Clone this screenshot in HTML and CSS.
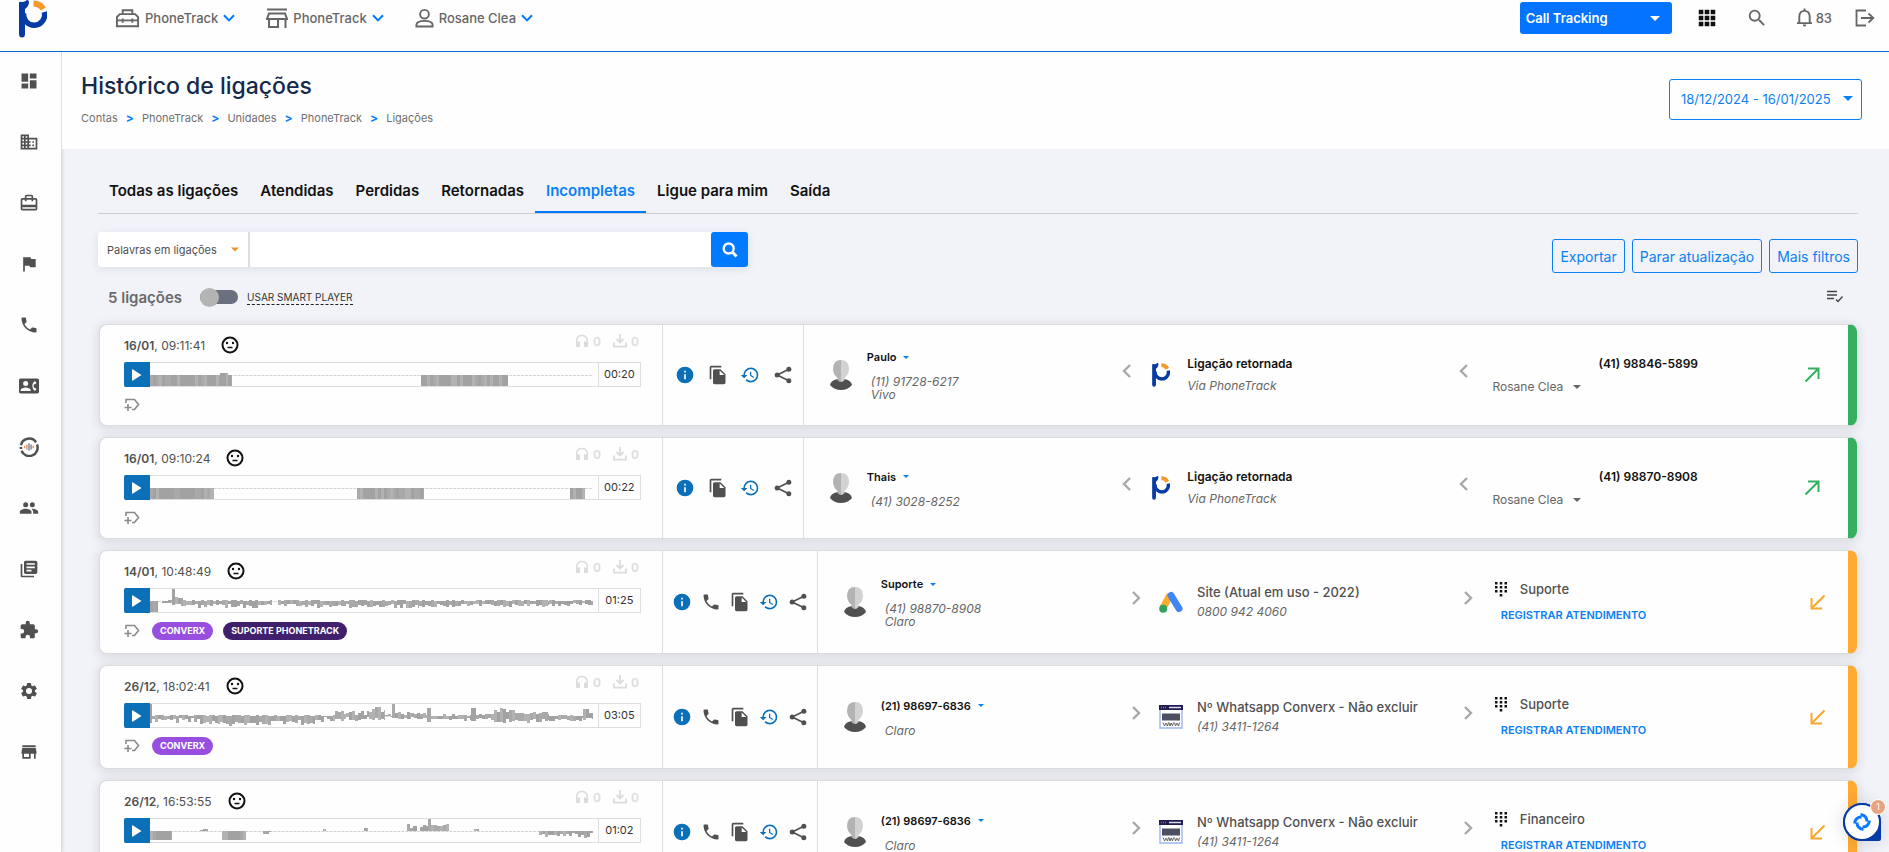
FILE: index.html
```html
<!DOCTYPE html>
<html lang="pt-BR">
<head>
<meta charset="utf-8">
<meta name="viewport" content="width=device-width, initial-scale=1">
<title>Histórico de ligações</title>
<link rel="stylesheet" href="styles.css">
<script src="script.js" defer></script>
</head>
<body>
<svg class="sprite" aria-hidden="true">
  <symbol id="brand" viewBox="0 0 28 38">
    <path d="M0 3Q0 1 3 2Q6 2 8 0Q10 0 10 2Q10 6 6 9V34Q6 37.500 3 37.500Q0 37.500 0 34Z" fill="#063aa5"/>
    <path d="M25.300 12A10.500 10.500 0 1 1 4.800 13" fill="none" stroke="#063aa5" stroke-width="5.400"/>
    <path d="M14.500 3.500A11.500 11.500 0 0 1 24.300 9" fill="none" stroke="#f7982a" stroke-width="6"/>
  </symbol>
  <symbol id="chev-down" viewBox="0 0 12 8"><path d="M1 1.2 6 6.4 11 1.2" fill="none" stroke="#007bff" stroke-width="2"/></symbol>
  <symbol id="chev-right" viewBox="0 0 9 14"><path d="M1 1 7 7 1 13" fill="none" stroke="#a8a8a8" stroke-width="2.4"/></symbol>
  <symbol id="chev-left" viewBox="0 0 9 14"><path d="M8 1 2 7 8 13" fill="none" stroke="#a8a8a8" stroke-width="2.4"/></symbol>
  <symbol id="caret" viewBox="0 0 10 5"><path d="M0 0H10L5 5Z"/></symbol>
  <symbol id="toolbox" viewBox="0 0 26 20"><path d="M8 6V2H18V6M2 9 5 6H21L24 9V18.5H2ZM2 12.5H24M8 10.5V15M18 10.5V15" fill="none" stroke="currentColor" stroke-width="2"/></symbol>
  <symbol id="store-line" viewBox="0 0 22 20"><path d="M1 1.5H21" stroke="currentColor" stroke-width="2"/><path d="M3 5.5H19L21 11H1ZM3 11V19H12V11M19.5 11V20" fill="none" stroke="currentColor" stroke-width="2"/></symbol>
  <symbol id="person" viewBox="0 0 20 20"><circle cx="10" cy="6" r="4.6" fill="none" stroke="currentColor" stroke-width="2"/><path d="M1.5 19V17Q2 13 10 13Q18 13 18.500 17V19Z" fill="none" stroke="currentColor" stroke-width="2"/></symbol>
  <symbol id="apps" viewBox="0 0 24 24"><path d="M3 8h5V3H3v5zm6.500 13h5v-5h-5v5zM3 21h5v-5H3v5zm0-6.500h5v-5H3v5zm6.500 0h5v-5h-5v5zM16 3v5h5V3h-5zM9.500 8h5V3h-5v5zm6.500 6.500h5v-5h-5v5zM16 21h5v-5h-5v5z"/></symbol>
  <symbol id="search" viewBox="0 0 24 24"><path d="M15.500 14h-.79l-.28-.27A6.471 6.471 0 0 0 16 9.500 6.500 6.500 0 1 0 9.500 16c1.610 0 3.090-.59 4.230-1.570l.27.28v.79l5 4.990L20.490 19l-4.990-5zm-6 0C7.010 14 5 11.990 5 9.500S7.010 5 9.500 5 14 7.010 14 9.500 11.990 14 9.500 14z"/></symbol>
  <symbol id="search-bold" viewBox="0 0 16 16"><circle cx="6.700" cy="6.500" r="5" fill="none" stroke="#fff" stroke-width="2.400"/><path d="M10.300 10 14.500 14.500" stroke="#fff" stroke-width="3"/></symbol>
  <symbol id="bell" viewBox="0 0 18 20"><path d="M1 16H17M3.500 16V8.500Q4 3 9 3T14.500 8.500V16M9 3V0.500" fill="none" stroke="currentColor" stroke-width="2"/><path d="M7 17.500H11L10 19.500H8Z" fill="currentColor"/></symbol>
  <symbol id="logout" viewBox="0 0 20 18"><path d="M11 1.500H1.500V16.500H11M6 9H18M13.500 4.500 18.300 9 13.500 13.500" fill="none" stroke="currentColor" stroke-width="1.800"/></symbol>
  <symbol id="dashboard" viewBox="0 0 24 24"><path d="M3 13h8V3H3v10zm0 8h8v-6H3v6zm10 0h8V11h-8v10zm0-18v6h8V3h-8z"/></symbol>
  <symbol id="building" viewBox="0 0 24 24"><path fill-rule="evenodd" d="M12 7V3H2v18h20V7H12zM6 19H4v-2h2v2zm0-4H4v-2h2v2zm0-4H4V9h2v2zm0-4H4V5h2v2zm4 12H8v-2h2v2zm0-4H8v-2h2v2zm0-4H8V9h2v2zm0-4H8V5h2v2zm10 12h-8v-2h2v-2h-2v-2h2v-2h-2V9h8v10zm-2-8h-2v2h2v-2zm0 4h-2v2h2v-2z"/></symbol>
  <symbol id="case" viewBox="0 0 24 24"><path fill-rule="evenodd" d="M20 6h-3V4c0-1.110-.89-2-2-2H9c-1.110 0-2 .89-2 2v2H4c-1.110 0-2 .89-2 2v11c0 1.110.89 2 2 2h16c1.110 0 2-.89 2-2V8c0-1.110-.89-2-2-2zM9 4h6v2H9V4zm11 15H4v-2h16v2zm0-5H4V8h3v2h2V8h6v2h2V8h3v6z"/></symbol>
  <symbol id="flag" viewBox="0 0 24 24"><path d="M14.400 6 14 4H5v17h2v-7h5.600l.4 2h7V6z"/></symbol>
  <symbol id="phone" viewBox="0 0 24 24"><path d="M6.620 10.790c1.440 2.830 3.760 5.140 6.590 6.590l2.200-2.200c.27-.27.67-.36 1.020-.24 1.120.37 2.330.57 3.570.57.550 0 1 .45 1 1V20c0 .55-.45 1-1 1-9.390 0-17-7.610-17-17 0-.55.45-1 1-1h3.500c.55 0 1 .45 1 1 0 1.250.2 2.450.57 3.570.11.350.03.740-.25 1.020l-2.200 2.200z"/></symbol>
  <symbol id="contact" viewBox="0 0 24 24"><path fill-rule="evenodd" d="M22 3H2C.9 3 0 3.900 0 5v14c0 1.100.9 2 2 2h20c1.100 0 2-.9 2-2V5c0-1.100-.9-2-2-2zM8 6a3 3 0 1 1 0 6 3 3 0 0 1 0-6zm6 12H2v-1c0-2 4-3.100 6-3.100s6 1.100 6 3.100v1zm3.850-4h1.640L21 16l-1.990 1.990A7.500 7.500 0 0 1 16 12c0-2.400 1.100-4.500 3.010-5.990L21 8l-1.510 2h-1.640a6 6 0 0 0 0 4z"/></symbol>
  <symbol id="voice" viewBox="0 0 24 24"><path d="M2.300 10A10 10 0 0 1 20.500 6.500M21.600 9A10 10 0 0 1 3 16.500M2.300 14.500V12" fill="none" stroke="#505050" stroke-width="3"/><path d="M7 10.500V13.500M9.500 9V15M17 10.500V13.500" stroke="#e0934a" stroke-width="1.600"/><path d="M12 7.500V16.500M14.500 9V15" stroke="#707b96" stroke-width="1.600"/></symbol>
  <symbol id="people" viewBox="0 0 24 24"><path d="M16 11a3 3 0 1 0 0-6 3 3 0 0 0 0 6zm-8 0a3 3 0 1 0 0-6 3 3 0 0 0 0 6zm0 2c-2.330 0-7 1.170-7 3.500V19h14v-2.500c0-2.330-4.670-3.500-7-3.500zm8 0c-.29 0-.62.020-.97.050 1.160.84 1.970 1.970 1.970 3.450V19h6v-2.500c0-2.330-4.670-3.500-7-3.500z"/></symbol>
  <symbol id="library" viewBox="0 0 24 24"><path fill-rule="evenodd" d="M4 6H2v14c0 1.100.9 2 2 2h14v-2H4V6zm16-4H8c-1.100 0-2 .9-2 2v12c0 1.100.9 2 2 2h12c1.100 0 2-.9 2-2V4c0-1.100-.9-2-2-2zm-1 9H9V9h10v2zm-4 4H9v-2h6v2zm4-8H9V5h10v2z"/></symbol>
  <symbol id="puzzle" viewBox="0 0 24 24"><path d="M20.500 11H19V7c0-1.100-.9-2-2-2h-4V3.500a2.500 2.500 0 0 0-5 0V5H4c-1.100 0-1.990.9-1.990 2v3.800H3.500a2.700 2.700 0 0 1 0 5.400H2V20c0 1.100.9 2 2 2h3.800v-1.500a2.700 2.700 0 0 1 5.400 0V22H17c1.100 0 2-.9 2-2v-4h1.500a2.500 2.500 0 0 0 0-5z"/></symbol>
  <symbol id="gear" viewBox="0 0 24 24"><path fill-rule="evenodd" d="M19.140 12.940c.04-.3.060-.61.060-.94s-.02-.64-.07-.94l2.030-1.580a.49.49 0 0 0 .12-.61l-1.920-3.320a.49.49 0 0 0-.59-.22l-2.390.96a7 7 0 0 0-1.620-.94l-.36-2.540a.48.48 0 0 0-.48-.41h-3.840a.48.48 0 0 0-.47.410l-.36 2.540c-.59.240-1.130.57-1.620.94l-2.390-.96a.48.48 0 0 0-.59.220L2.740 8.870a.48.480 0 0 0 .12.610l2.030 1.580a6 6 0 0 0 0 1.880l-2.030 1.580a.49.490 0 0 0-.12.610l1.920 3.320c.12.220.37.290.59.220l2.390-.96c.5.380 1.030.7 1.620.94l.36 2.540c.05.240.24.410.48.410h3.840c.24 0 .44-.17.470-.41l.36-2.540c.59-.24 1.130-.56 1.620-.94l2.390.96c.22.080.47 0 .59-.22l1.920-3.320a.47.470 0 0 0-.12-.61zM12 15.600a3.600 3.600 0 1 1 0-7.200 3.600 3.600 0 0 1 0 7.200z"/></symbol>
  <symbol id="store" viewBox="0 0 24 24"><path fill-rule="evenodd" d="M20 4H4v2h16V4zm1 10v-2l-1-5H4l-1 5v2h1v6h10v-6h4v6h2v-6h1zm-9 4H6v-4h6v4z"/></symbol>
  <symbol id="list-check" viewBox="0 0 18 14"><path d="M1 1.500H11M1 5H11M1 8.500H8M10 9.500 12 11.500 16.500 6.500" fill="none" stroke="#444" stroke-width="1.400"/></symbol>
  <symbol id="face" viewBox="0 0 18 18"><circle cx="9" cy="9" r="7.500" fill="none" stroke="#111" stroke-width="2"/><circle cx="6" cy="7" r="1.200"/><circle cx="12" cy="7" r="1.200"/><path d="M6.500 11.500H11.500" stroke="#111" stroke-width="1.500"/></symbol>
  <symbol id="headset" viewBox="0 0 14 14"><path d="M1.700 11V6.500Q2 1.500 7 1.500T12.300 6.500V11" fill="none" stroke="#dcdcdc" stroke-width="1.600"/><path d="M1 7.500H5V13H2Q1 13 1 12ZM13 7.500H9V13H12Q13 13 13 12Z" fill="#dcdcdc"/></symbol>
  <symbol id="download" viewBox="0 0 14 14"><path d="M7 0V8M3.500 5 7 8.500 10.500 5M1 8.500V12.700H13V8.500" fill="none" stroke="#dcdcdc" stroke-width="1.800"/></symbol>
  <symbol id="play" viewBox="0 0 10 12"><path d="M0 1Q0 0 1 .5L9.500 6L1 11.500Q0 12 0 11Z" fill="#fff"/></symbol>
  <symbol id="tag-add" viewBox="0 0 16 14"><path d="M2 5V1.500H10.500L14.500 6.500 10.500 11.500H8M4 6V13M0.500 9.500H7.500" fill="none" stroke="#8a8a8a" stroke-width="1.600"/></symbol>
  <symbol id="info" viewBox="0 0 24 24"><path fill="#0b70b7" fill-rule="evenodd" d="M12 2a10 10 0 1 0 0 20 10 10 0 0 0 0-20zm1 15h-2v-6h2v6zm0-8h-2V7h2v2z"/></symbol>
  <symbol id="copy" viewBox="0 0 24 24"><path fill-rule="evenodd" d="M16 1H4c-1.100 0-2 .9-2 2v14h2V3h12V1zm-1 4 6 6v10c0 1.100-.9 2-2 2H7.990C6.890 23 6 22.100 6 21V7c0-1.100.89-2 1.990-2H15zm-1 7h5.500L14 6.500V12z"/></symbol>
  <symbol id="history" viewBox="0 0 24 24"><path fill="#0b70b7" d="M13 3a9 9 0 0 0-9 9H1l3.890 3.890.07.140L9 12H6c0-3.870 3.130-7 7-7s7 3.130 7 7-3.130 7-7 7c-1.930 0-3.680-.79-4.940-2.060l-1.420 1.420A8.954 8.954 0 0 0 13 21a9 9 0 0 0 0-18zm-1 5v5l4.280 2.540.72-1.210-3.500-2.080V8H12z"/></symbol>
  <symbol id="share" viewBox="0 0 24 24"><path d="M19 5 5 12 19 19" fill="none" stroke="#505050" stroke-width="2"/><circle cx="19" cy="5" r="3"/><circle cx="5" cy="12" r="3"/><circle cx="19" cy="19" r="3"/></symbol>
  <symbol id="avatar" viewBox="0 0 22 30"><path d="M0 25Q1 20 8 19H14Q21 20 22 25Q18 30 11 30T0 25Z" fill="#505050"/><path d="M11 0Q3 0 3 9Q3 14 7.500 18V20Q9 22 11 22Z" fill="#b3b3b3"/><path d="M11 0Q19 0 19 9Q19 14 14.500 18V20Q13 22 11 22Z" fill="#d2d2d2"/></symbol>
  <symbol id="ads" viewBox="0 0 24 22"><path d="M11 4 4 17" stroke="#fbab2c" stroke-width="7"/><path d="M12 4.500 20 17.500" stroke="#4285f4" stroke-width="7" stroke-linecap="round"/><circle cx="4.200" cy="17.800" r="4" fill="#34a05c"/></symbol>
  <symbol id="site" viewBox="0 0 24 24"><path d="M1 4H23V23H1Z" fill="#fff" stroke="#9db6ee" stroke-width="1.400"/><path d="M0 0H24V5H0Z" fill="#231c50"/><path d="M10 2.500H22" stroke="#d5dcf2" stroke-width="1.500"/><path d="M2 2.500H7" stroke="#b05a60" stroke-width="1.500" stroke-dasharray="1 1"/><path d="M3 8.500H21V15.500H3Z" fill="#4e4f62"/><path d="M4 17.500 5.500 21 7 18 8.500 21 9.500 17.500M10 17.500 11 21 12.200 18 13.500 21 14.500 17.500M15.500 17.500 16.500 21 18 18 19.500 21 20.500 17.500" fill="none" stroke="#666" stroke-width="1"/></symbol>
  <symbol id="dialpad" viewBox="0 0 12 15"><path d="M0 0h2.500v2.500H0zM4.750 0h2.500v2.500h-2.500zM9.500 0H12v2.500H9.500zM0 4h2.500v2.500H0zM4.750 4h2.500v2.500h-2.500zM9.500 4H12v2.500H9.500zM0 8h2.500v2.500H0zM4.750 8h2.500v2.500h-2.500zM9.500 8H12v2.500H9.500zM4.750 12h2.500v2.500h-2.500z"/></symbol>
  <symbol id="arrow-out" viewBox="0 0 16 16"><path d="M1.500 14.500 14 2M4 1.500H14.500V12" fill="none" stroke="#33b060" stroke-width="2"/></symbol>
  <symbol id="arrow-in" viewBox="0 0 16 16"><path d="M14.500 1.500 2 14M1.500 4V14.500H12" fill="none" stroke="#fba62c" stroke-width="2"/></symbol>
  <symbol id="widget" viewBox="0 0 20 20"><path d="M8.500 2.500Q15 3.500 15 9.500M17.500 8.500Q16.500 15 10.500 15M11.500 17.500Q5 16.500 5 10.500M2.500 11.500Q3.500 5 9.500 5" fill="none" stroke="#0a7bff" stroke-width="3"/></symbol>
</svg>

<header class="topbar">
  <a class="logo" href="#" aria-label="PhoneTrack"><svg><use href="#brand"/></svg></a>
  <nav class="accounts" aria-label="Contas">
    <button class="account"><svg class="i-toolbox"><use href="#toolbox"/></svg>PhoneTrack<svg class="i-chev"><use href="#chev-down"/></svg></button>
    <button class="account"><svg class="i-store"><use href="#store-line"/></svg>PhoneTrack<svg class="i-chev"><use href="#chev-down"/></svg></button>
    <button class="account"><svg class="i-person"><use href="#person"/></svg>Rosane Clea<svg class="i-chev"><use href="#chev-down"/></svg></button>
  </nav>
  <div class="tools">
    <div class="product">
      <select aria-label="Produto"><option>Call Tracking</option></select>
      <svg class="i-caret"><use href="#caret"/></svg>
    </div>
    <button class="tool tool-dark" aria-label="Aplicativos"><svg><use href="#apps"/></svg></button>
    <button class="tool" aria-label="Buscar"><svg><use href="#search"/></svg></button>
    <button class="tool notices" aria-label="Notificações"><svg><use href="#bell"/></svg>83</button>
    <button class="tool exit" aria-label="Sair"><svg><use href="#logout"/></svg></button>
  </div>
</header>

<div class="shell">
  <nav class="sidebar" aria-label="Menu">
    <a href="#" aria-label="Painel"><svg><use href="#dashboard"/></svg></a>
    <a href="#" aria-label="Empresas"><svg><use href="#building"/></svg></a>
    <a href="#" aria-label="Contas"><svg><use href="#case"/></svg></a>
    <a href="#" aria-label="Campanhas"><svg><use href="#flag"/></svg></a>
    <a href="#" aria-label="Ligações"><svg><use href="#phone"/></svg></a>
    <a href="#" aria-label="Contatos"><svg><use href="#contact"/></svg></a>
    <a href="#" aria-label="Voz"><svg><use href="#voice"/></svg></a>
    <a href="#" aria-label="Usuários"><svg><use href="#people"/></svg></a>
    <a href="#" aria-label="Relatórios"><svg><use href="#library"/></svg></a>
    <a href="#" aria-label="Integrações"><svg><use href="#puzzle"/></svg></a>
    <a href="#" aria-label="Configurações"><svg><use href="#gear"/></svg></a>
    <a href="#" aria-label="Loja"><svg><use href="#store"/></svg></a>
  </nav>

  <main class="main">
    <section class="pagehead">
      <div>
        <h1>Histórico de ligações</h1>
        <nav class="crumbs" aria-label="Trilha"><a href="#">Contas</a><b>&gt;</b><a href="#">PhoneTrack</a><b>&gt;</b><a href="#">Unidades</a><b>&gt;</b><a href="#">PhoneTrack</a><b>&gt;</b><a href="#">Ligações</a></nav>
      </div>
      <button class="period">18/12/2024 - 16/01/2025<svg class="i-caret"><use href="#caret"/></svg></button>
    </section>

    <section class="content">
      <nav class="tabs" aria-label="Tipos de ligação">
        <a href="#">Todas as ligações</a><a href="#">Atendidas</a><a href="#">Perdidas</a><a href="#">Retornadas</a><a href="#" class="active">Incompletas</a><a href="#">Ligue para mim</a><a href="#">Saída</a>
      </nav>

      <div class="filters">
        <form class="searchbox">
          <div class="scope">
            <select aria-label="Campo"><option>Palavras em ligações</option></select>
            <svg class="i-caret"><use href="#caret"/></svg>
          </div>
          <input type="text" aria-label="Pesquisar">
          <button type="button" aria-label="Pesquisar"><svg><use href="#search-bold"/></svg></button>
        </form>
        <div class="outline-buttons">
          <button>Exportar</button><button>Parar atualização</button><button>Mais filtros</button>
        </div>
      </div>

      <div class="summary">
        <strong>5 ligações</strong>
        <label class="switch"><input type="checkbox"><span>Usar smart player</span></label>
        <button class="bulk" aria-label="Selecionar"><svg><use href="#list-check"/></svg></button>
      </div>

      <div class="calls">
        <article class="call out">
          <div class="audio">
            <div class="when"><span><b>16/01</b>, 09:11:41</span><svg class="i-face"><use href="#face"/></svg><span class="counts"><svg><use href="#headset"/></svg>0<svg><use href="#download"/></svg>0</span></div>
            <div class="player"><button aria-label="Ouvir"><svg><use href="#play"/></svg></button><svg class="wave" data-wave="a"></svg><time>00:20</time></div>
            <div class="tags"><button aria-label="Adicionar tag"><svg><use href="#tag-add"/></svg></button></div>
          </div>
          <div class="actions">
            <button aria-label="Detalhes"><svg><use href="#info"/></svg></button><button aria-label="Copiar"><svg><use href="#copy"/></svg></button><button aria-label="Histórico"><svg><use href="#history"/></svg></button><button aria-label="Compartilhar"><svg><use href="#share"/></svg></button>
          </div>
          <div class="route">
            <div class="contact"><svg class="i-avatar"><use href="#avatar"/></svg><div><button class="name">Paulo<svg><use href="#caret"/></svg></button><p>(11) 91728-6217</p><p>Vivo</p></div></div>
            <div class="source"><svg class="i-step"><use href="#chev-left"/></svg><svg class="i-brand"><use href="#brand"/></svg><div><h2>Ligação retornada</h2><p>Via PhoneTrack</p></div></div>
            <div class="target"><svg class="i-step"><use href="#chev-left"/></svg><div><h3>(41) 98846-5899</h3><button class="agent">Rosane Clea<svg><use href="#caret"/></svg></button></div><svg class="i-arrow"><use href="#arrow-out"/></svg></div>
          </div>
        </article>

        <article class="call out">
          <div class="audio">
            <div class="when"><span><b>16/01</b>, 09:10:24</span><svg class="i-face"><use href="#face"/></svg><span class="counts"><svg><use href="#headset"/></svg>0<svg><use href="#download"/></svg>0</span></div>
            <div class="player"><button aria-label="Ouvir"><svg><use href="#play"/></svg></button><svg class="wave" data-wave="b"></svg><time>00:22</time></div>
            <div class="tags"><button aria-label="Adicionar tag"><svg><use href="#tag-add"/></svg></button></div>
          </div>
          <div class="actions">
            <button aria-label="Detalhes"><svg><use href="#info"/></svg></button><button aria-label="Copiar"><svg><use href="#copy"/></svg></button><button aria-label="Histórico"><svg><use href="#history"/></svg></button><button aria-label="Compartilhar"><svg><use href="#share"/></svg></button>
          </div>
          <div class="route">
            <div class="contact"><svg class="i-avatar"><use href="#avatar"/></svg><div><button class="name">Thais<svg><use href="#caret"/></svg></button><p>(41) 3028-8252</p></div></div>
            <div class="source"><svg class="i-step"><use href="#chev-left"/></svg><svg class="i-brand"><use href="#brand"/></svg><div><h2>Ligação retornada</h2><p>Via PhoneTrack</p></div></div>
            <div class="target"><svg class="i-step"><use href="#chev-left"/></svg><div><h3>(41) 98870-8908</h3><button class="agent">Rosane Clea<svg><use href="#caret"/></svg></button></div><svg class="i-arrow"><use href="#arrow-out"/></svg></div>
          </div>
        </article>

        <article class="call in">
          <div class="audio">
            <div class="when"><span><b>14/01</b>, 10:48:49</span><svg class="i-face"><use href="#face"/></svg><span class="counts"><svg><use href="#headset"/></svg>0<svg><use href="#download"/></svg>0</span></div>
            <div class="player"><button aria-label="Ouvir"><svg><use href="#play"/></svg></button><svg class="wave" data-wave="c"></svg><time>01:25</time></div>
            <div class="tags"><button aria-label="Adicionar tag"><svg><use href="#tag-add"/></svg></button><span class="pill">Converx</span><span class="pill dark">Suporte PhoneTrack</span></div>
          </div>
          <div class="actions">
            <button aria-label="Detalhes"><svg><use href="#info"/></svg></button><button aria-label="Ligar"><svg><use href="#phone"/></svg></button><button aria-label="Copiar"><svg><use href="#copy"/></svg></button><button aria-label="Histórico"><svg><use href="#history"/></svg></button><button aria-label="Compartilhar"><svg><use href="#share"/></svg></button>
          </div>
          <div class="route">
            <div class="contact"><svg class="i-avatar"><use href="#avatar"/></svg><div><button class="name">Suporte<svg><use href="#caret"/></svg></button><p>(41) 98870-8908</p><p>Claro</p></div></div>
            <div class="source"><svg class="i-step"><use href="#chev-right"/></svg><svg class="i-media"><use href="#ads"/></svg><div><h2>Site (Atual em uso - 2022)</h2><p>0800 942 4060</p></div></div>
            <div class="target"><svg class="i-step"><use href="#chev-right"/></svg><div><h3><svg><use href="#dialpad"/></svg>Suporte</h3><a href="#">REGISTRAR ATENDIMENTO</a></div><svg class="i-arrow"><use href="#arrow-in"/></svg></div>
          </div>
        </article>

        <article class="call in">
          <div class="audio">
            <div class="when"><span><b>26/12</b>, 18:02:41</span><svg class="i-face"><use href="#face"/></svg><span class="counts"><svg><use href="#headset"/></svg>0<svg><use href="#download"/></svg>0</span></div>
            <div class="player"><button aria-label="Ouvir"><svg><use href="#play"/></svg></button><svg class="wave" data-wave="d"></svg><time>03:05</time></div>
            <div class="tags"><button aria-label="Adicionar tag"><svg><use href="#tag-add"/></svg></button><span class="pill">Converx</span></div>
          </div>
          <div class="actions">
            <button aria-label="Detalhes"><svg><use href="#info"/></svg></button><button aria-label="Ligar"><svg><use href="#phone"/></svg></button><button aria-label="Copiar"><svg><use href="#copy"/></svg></button><button aria-label="Histórico"><svg><use href="#history"/></svg></button><button aria-label="Compartilhar"><svg><use href="#share"/></svg></button>
          </div>
          <div class="route">
            <div class="contact"><svg class="i-avatar"><use href="#avatar"/></svg><div><button class="name">(21) 98697-6836<svg><use href="#caret"/></svg></button><p>Claro</p></div></div>
            <div class="source"><svg class="i-step"><use href="#chev-right"/></svg><svg class="i-media"><use href="#site"/></svg><div><h2>Nº Whatsapp Converx - Não excluir</h2><p>(41) 3411-1264</p></div></div>
            <div class="target"><svg class="i-step"><use href="#chev-right"/></svg><div><h3><svg><use href="#dialpad"/></svg>Suporte</h3><a href="#">REGISTRAR ATENDIMENTO</a></div><svg class="i-arrow"><use href="#arrow-in"/></svg></div>
          </div>
        </article>

        <article class="call in">
          <div class="audio">
            <div class="when"><span><b>26/12</b>, 16:53:55</span><svg class="i-face"><use href="#face"/></svg><span class="counts"><svg><use href="#headset"/></svg>0<svg><use href="#download"/></svg>0</span></div>
            <div class="player"><button aria-label="Ouvir"><svg><use href="#play"/></svg></button><svg class="wave" data-wave="e"></svg><time>01:02</time></div>
            <div class="tags"><button aria-label="Adicionar tag"><svg><use href="#tag-add"/></svg></button></div>
          </div>
          <div class="actions">
            <button aria-label="Detalhes"><svg><use href="#info"/></svg></button><button aria-label="Ligar"><svg><use href="#phone"/></svg></button><button aria-label="Copiar"><svg><use href="#copy"/></svg></button><button aria-label="Histórico"><svg><use href="#history"/></svg></button><button aria-label="Compartilhar"><svg><use href="#share"/></svg></button>
          </div>
          <div class="route">
            <div class="contact"><svg class="i-avatar"><use href="#avatar"/></svg><div><button class="name">(21) 98697-6836<svg><use href="#caret"/></svg></button><p>Claro</p></div></div>
            <div class="source"><svg class="i-step"><use href="#chev-right"/></svg><svg class="i-media"><use href="#site"/></svg><div><h2>Nº Whatsapp Converx - Não excluir</h2><p>(41) 3411-1264</p></div></div>
            <div class="target"><svg class="i-step"><use href="#chev-right"/></svg><div><h3><svg><use href="#dialpad"/></svg>Financeiro</h3><a href="#">REGISTRAR ATENDIMENTO</a></div><svg class="i-arrow"><use href="#arrow-in"/></svg></div>
          </div>
        </article>
      </div>
    </section>
  </main>
</div>

<button class="helper" aria-label="Ajuda"><span class="helper-disc"><svg><use href="#widget"/></svg></span><span class="helper-count">1</span></button>
</body>
</html>
```
FILE: styles.css
```css
* { box-sizing: border-box; }
body {
  margin: 0;
  height: 100vh;
  overflow: hidden;
  display: flex;
  flex-direction: column;
  background: #f1f3f8;
  color: #505050;
  font-family: Inter, "Liberation Sans", sans-serif;
  font-size: 12px;
}
h1, h2, h3, p { margin: 0; }
a { color: inherit; text-decoration: none; }
button, select, input { font: inherit; color: inherit; border: 0; background: none; padding: 0; margin: 0; }
select { appearance: none; outline: 0; }
svg { display: block; flex: none; fill: currentColor; }
.sprite { position: absolute; width: 0; height: 0; }
.i-caret { width: 10px; height: 5px; }

/* Top bar */
.topbar {
  flex: none;
  height: 52px;
  padding: 0 14px 0 19px;
  display: flex;
  align-items: flex-start;
  background: #fefefe;
  border-bottom: 1px solid #0a6fdc;
  color: #666;
}
.logo svg { width: 28px; height: 38px; }
.accounts { display: flex; gap: 31px; margin-left: 68px; height: 35px; }
.account { display: flex; align-items: center; gap: 5px; font-size: 13px; font-weight: 500; }
.i-toolbox { width: 25px; height: 20px; }
.i-store { width: 22px; height: 20px; }
.i-person { width: 19px; height: 20px; }
.i-chev { width: 12px; height: 8px; }
.tools { display: flex; align-items: center; gap: 28px; margin-left: auto; height: 35px; }
.product { position: relative; width: 152px; margin-top: 1px; }
.product select {
  width: 100%;
  height: 32px;
  padding: 0 6px;
  border-radius: 3px;
  background: #0473ff;
  color: #fff;
  font-size: 13px;
  font-weight: 600;
}
.product .i-caret { position: absolute; right: 12px; top: 14px; color: #fff; }
.tool svg { width: 22px; height: 22px; }
.tool-dark { color: #111; margin-left: -4px; }
.notices { display: flex; align-items: center; gap: 3px; font-size: 13px; font-weight: 500; }
.notices svg { width: 17px; height: 19px; }
.exit { margin-left: -5px; }
.exit svg { width: 20px; height: 18px; }

.shell { flex: 1; min-height: 0; display: flex; }
.sidebar {
  flex: none;
  width: 62px;
  padding-right: 4px;
  display: flex;
  flex-direction: column;
  gap: 3px;
  background: #fefefe;
  border-right: 1px solid #dcdfe3;
  box-shadow: 1px 0 3px rgba(0, 0, 0, .1);
}
.sidebar a { height: 58px; display: grid; place-items: center; }
.sidebar svg { width: 20px; height: 20px; }
.main { flex: 1; min-width: 0; overflow: hidden; }

.pagehead {
  height: 97px;
  padding: 21px 27px 0 19px;
  display: flex;
  justify-content: space-between;
  background: #fefefe;
}
.pagehead h1 { color: #15294b; font-size: 23px; line-height: 26px; font-weight: 500; }
.crumbs { display: flex; align-items: center; gap: 8px; margin-top: 11px; font-size: 11px; line-height: 16px; color: #707070; }
.crumbs b { color: #007bff; font-size: 12px; font-weight: 700; }
.period {
  height: 41px;
  width: 193px;
  margin-top: 6px;
  padding: 0 8px 2px 11px;
  display: flex;
  align-items: center;
  justify-content: space-between;
  border: 1px solid #0a80f5;
  border-radius: 3px;
  color: #0a80f5;
  font-size: 13px;
}

.content { padding: 20px 31px 0 36px; }
.tabs { display: flex; border-bottom: 1px solid #ccced2; }
.tabs a {
  height: 44px;
  padding: 0 11px;
  line-height: 43px;
  border-bottom: 2px solid transparent;
  color: #111;
  font-size: 15px;
  font-weight: 600;
}
.tabs .active { color: #0a80f5; border-color: #007bff; }

.filters { display: flex; justify-content: space-between; margin-top: 18px; }
.searchbox {
  display: flex;
  width: 650px;
  height: 35px;
  background: #fff;
  border-radius: 3px;
  box-shadow: 0 2px 8px rgba(30, 50, 90, .1);
}
.scope { position: relative; width: 152px; border-right: 2px solid #dedede; }
.scope select { width: 100%; height: 35px; padding: 0 20px 0 9px; font-size: 11px; }
.scope .i-caret { position: absolute; right: 9px; top: 15px; width: 8px; color: #ec922f; }
.searchbox input { flex: 1; min-width: 0; padding: 0 10px; outline: 0; }
.searchbox button { width: 37px; display: grid; place-items: center; border-radius: 3px; background: #007bff; }
.searchbox button svg { width: 16px; height: 16px; }
.outline-buttons { display: flex; gap: 7px; padding-top: 7px; }
.outline-buttons button {
  height: 34px;
  padding: 0 7px;
  border: 1px solid #0a80f5;
  border-radius: 3px;
  color: #0a80f5;
  font-size: 14px;
}

.summary { display: flex; align-items: center; height: 20px; margin-top: 14px; padding: 0 14px 0 10px; }
.summary strong { color: #6a6a6a; font-size: 15px; font-weight: 600; }
.switch { display: flex; align-items: center; gap: 9px; margin-left: 18px; font-size: 10px; text-transform: uppercase; color: #333; }
.switch input { appearance: none; display: flex; align-items: center; width: 38px; height: 14px; border-radius: 7px; background: #6b7080; }
.switch input::before { content: ""; width: 19px; height: 19px; border-radius: 50%; background: #b4b4b4; flex: none; }
.switch span { border-bottom: 1px dashed #222; line-height: 14px; }
.bulk { margin-left: auto; }
.bulk svg { width: 18px; height: 14px; }

/* Call cards */
.calls { display: grid; gap: 11px; margin-top: 17px; padding: 0 1px; }
.call {
  display: flex;
  height: 104px;
  background: #fefefe;
  border: 1px solid #dcdcdc;
  border-right: 9px solid #ffaa33;
  border-radius: 8px;
  box-shadow: 0 2px 10px 3px rgba(0, 0, 0, .08);
}
.call.out { height: 102px; border-right-color: #33b060; }
.audio { flex: none; width: 32.2%; padding: 10px 21px 0 24px; border-right: 1px solid #dedede; }
.when { display: flex; align-items: center; height: 20px; font-size: 12px; }
.when b { font-weight: 600; }
.i-face { width: 18px; height: 18px; margin-left: 16px; color: #111; }
.counts { display: flex; gap: 4px; align-items: center; margin: -8px 0 0 auto; color: #dcdcdc; font-size: 12px; font-weight: 600; padding-right: 2px; }
.counts svg { width: 14px; height: 14px; }
.counts svg:last-of-type { margin-left: 8px; }
.player { display: flex; height: 25px; margin-top: 7px; border: 1px solid #dedede; border-left: 0; }
.player button { width: 26px; height: 25px; margin-top: -1px; display: grid; place-items: center; border-radius: 2px 0 0 2px; background: #0b70b7; }
.player button svg { width: 10px; height: 12px; }
.wave { flex: 1; min-width: 0; height: 23px; }
.player time { width: 42px; border-left: 1px solid #dedede; text-align: center; line-height: 23px; font-size: 11px; color: #333; }
.tags { display: flex; align-items: center; gap: 10px; height: 18px; margin-top: 9px; }
.tags button { margin-right: 2px; }
.tags svg { width: 16px; height: 14px; }
.pill { padding: 0 8px; border-radius: 9px; background: #984fe0; color: #fff; font-size: 9px; font-weight: 700; line-height: 18px; text-transform: uppercase; }
.pill.dark { background: #40206c; }

.actions {
  flex: none;
  width: 155px;
  padding: 0 9px;
  display: flex;
  align-items: center;
  justify-content: space-between;
  border-right: 1px solid #dedede;
}
.out .actions { width: 141px; padding: 0 10px 0 12px; }
.actions svg { width: 20px; height: 20px; }

.route { flex: 1; min-width: 0; display: grid; grid-template-columns: 305fr 322fr 373fr; }
.contact, .source, .target { display: flex; align-items: center; }
.contact { padding-left: 26px; gap: 15px; }
.i-avatar { width: 22px; height: 30px; }
.name { display: flex; align-items: center; gap: 7px; height: 16px; margin-bottom: 10px; font-size: 11px; font-weight: 600; color: #111; }
.name svg { width: 6px; height: 3px; color: #0a80f5; }
.contact p { margin-left: 4px; font-size: 12px; line-height: 13px; font-style: italic; color: #666; }
.i-step { width: 9px; height: 14px; margin-bottom: 8px; }
.i-brand { width: 18px; height: 24px; margin-left: 21px; }
.i-media { width: 24px; height: 24px; margin-left: 18px; }
.source h2 { font-size: 13px; font-weight: 500; line-height: 16px; margin-bottom: 4px; }
.source div { margin-left: 14px; }
.source p { font-size: 12px; line-height: 16px; font-style: italic; color: #666; }
.out .source div { margin-left: 17px; }
.out .source h2 { margin-bottom: 6px; font-size: 12px; font-weight: 600; color: #111; }
.target { padding-right: 22px; }
.out .target { padding-right: 28px; }
.target > div { flex: 1; margin-left: 22px; }
.out .target > div { margin-left: 25px; }
.target h3 { display: flex; align-items: center; gap: 13px; height: 16px; font-size: 13px; font-weight: 500; margin-bottom: 10px; }
.target h3 svg { width: 12px; height: 15px; color: #111; }
.out .target h3 { justify-content: center; font-size: 12px; font-weight: 600; color: #111; margin-bottom: 7px; }
.target a { display: block; margin-left: 6px; line-height: 16px; font-size: 11px; font-weight: 600; color: #0a80f5; }
.agent { display: flex; align-items: center; gap: 10px; height: 16px; font-size: 12px; color: #666; }
.agent svg { width: 8px; height: 4px; }
.i-arrow { width: 16px; height: 16px; }

/* Floating help bubble */
.helper { position: fixed; right: 8px; bottom: 11px; width: 38px; height: 38px; border-radius: 19px 19px 2px 19px; background: #063aa5; box-shadow: 0 0 18px rgba(0, 0, 0, .14); }
.helper-disc { display: grid; place-items: center; height: 38px; border: 2px solid #063aa5; border-radius: 50%; background: #fff; }
.helper-disc svg { width: 20px; height: 20px; }
.helper-count { position: absolute; right: -5px; top: -4px; width: 16px; height: 16px; border: 1px solid #fff; border-radius: 50%; background: #e8a47e; color: #fff; font-size: 9px; line-height: 14px; text-align: center; }
```
FILE: script.js
```js
// Each segment: [from, to, up min, up max, down min, down max] along a 449-unit track.
const WAVES = {
  a: [[0, 82, 0, 0, 11, 11], [70, 78, 2, 2, 11, 11], [272, 359, 0, 0, 11, 11]],
  b: [[0, 64, 0, 0, 11, 11], [208, 275, 0, 0, 11, 11], [421, 436, 0, 0, 11, 11]],
  c: [[0, 8, 0, 0, 11, 11], [12, 22, 0, 1, 1, 4], [22, 25, 12, 12, 4, 4], [25, 33, 2, 5, 2, 5],
      [33, 122, 0, 1, 3, 7], [128, 270, 0, 1, 3, 7], [270, 400, 0, 1, 3, 6], [400, 444, 0, 1, 2, 5]],
  d: [[0, 2, 12, 12, 7, 7], [2, 50, 0, 1, 2, 7], [50, 70, 0, 1, 5, 9], [70, 165, 0, 1, 4, 10],
      [165, 185, 0, 1, 1, 9], [185, 220, 1, 6, 1, 5], [220, 236, 3, 9, 1, 7], [236, 243, 0, 2, 0, 1],
      [243, 246, 12, 12, 2, 2], [246, 262, 1, 4, 2, 5], [262, 278, 1, 4, 1, 3], [278, 282, 8, 8, 6, 6],
      [282, 322, 0, 2, 2, 6], [322, 327, 8, 8, 5, 5], [327, 345, 1, 2, 2, 4], [345, 366, 3, 8, 3, 7],
      [366, 400, 1, 4, 3, 7], [400, 434, 0, 1, 2, 5], [434, 440, 4, 8, 2, 4], [440, 444, 1, 3, 2, 4]],
  e: [[0, 22, 0, 0, 9, 9], [50, 58, 1, 3, 0, 0], [72, 96, 0, 0, 9, 9], [113, 121, 0, 0, 1, 3],
      [173, 176, 2, 2, 0, 0], [215, 219, 3, 3, 0, 0], [258, 268, 2, 7, 0, 0], [271, 279, 3, 8, 0, 0],
      [279, 282, 12, 12, 0, 0], [282, 300, 3, 7, 0, 0], [325, 330, 1, 2, 0, 0], [390, 444, 0, 0, 2, 7]]
};

const SHADES = ["#a9a9a9", "#a2a2a2", "#b2b2b2"];
const MIDDLE = 12;

document.querySelectorAll(".wave").forEach((svg, row) => {
  let seed = 17 + row * 101;
  const next = () => (seed = (seed * 1103515245 + 12345) % 2147483648) / 2147483648;
  const pick = (lo, hi) => Math.round(lo + next() * (hi - lo));
  svg.setAttribute("viewBox", "0 0 449 23");
  svg.setAttribute("preserveAspectRatio", "none");
  let out = '<path d="M0 12.5H444" stroke="#d4d4d4" stroke-dasharray="3 1"/>';
  for (const [from, to, u0, u1, d0, d1] of WAVES[svg.dataset.wave]) {
    for (let x = from; x < to; x += 3) {
      const up = pick(u0, u1);
      const down = pick(d0, d1);
      const width = Math.min(3, to - x);
      out += `<rect x="${x}" y="${MIDDLE - up}" width="${width}" height="${up + down || 1}" fill="${SHADES[pick(0, 2)]}" shape-rendering="crispEdges"/>`;
    }
  }
  svg.innerHTML = out;
});
```
